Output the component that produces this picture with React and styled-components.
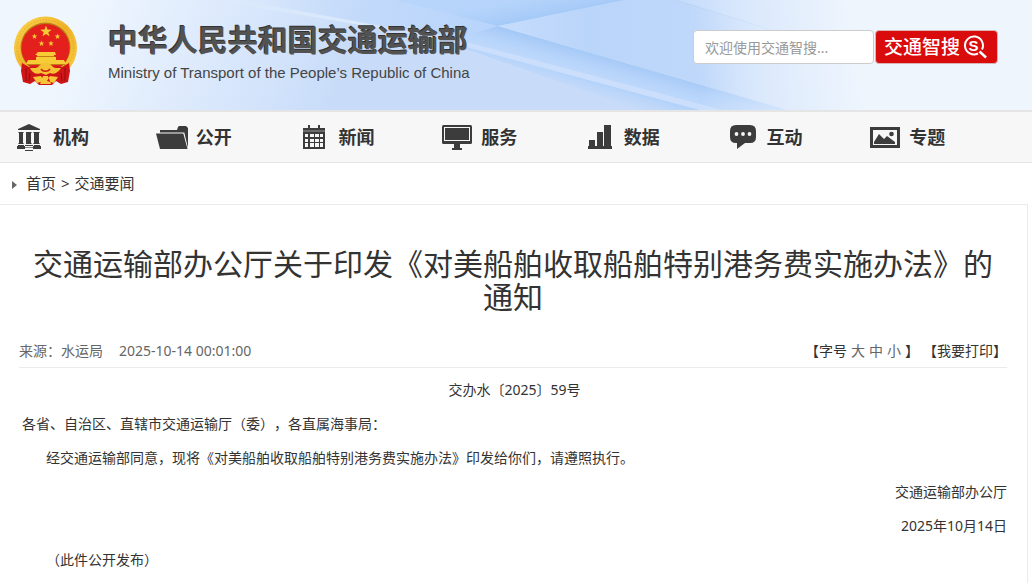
import React from 'react';
import styled, { createGlobalStyle } from 'styled-components';

const GlobalStyle = createGlobalStyle`
  * {
    box-sizing: border-box;
  }
  body {
    margin: 0;
    background: #fff;
    color: #333;
    font-family: "Noto Sans", "Noto Sans CJK SC", sans-serif;
    font-size: 14px;
    text-spacing-trim: space-all;
  }
  button, input {
    font-family: inherit;
  }
  a {
    color: inherit;
    text-decoration: none;
  }
`;

const Page = styled.div`
  display: flex;
  flex-direction: column;
  min-height: 100vh;
`;

// Header
const Header = styled.header`
  position: relative;
  display: flex;
  justify-content: space-between;
  align-items: flex-start;
  height: 112px;
  padding: 16px 34px 0 13px;
  border-bottom: 2px solid #e5e5e5;
  background: #eef5fe;
  overflow: hidden;
`;

const HeaderArt = styled.svg`
  position: absolute;
  inset: 0;
  width: 100%;
  height: 100%;
`;

const Brand = styled.a`
  position: relative;
  display: flex;
  gap: 30px;
`;

const BrandText = styled.div`
  padding-top: 4px;
`;

const SiteName = styled.h1`
  margin: 0;
  font-size: 30px;
  line-height: 40px;
  font-weight: 700;
  color: #525252;
  text-shadow: -1px -1px 0 #333;
`;

const SiteNameEn = styled.p`
  margin: 0;
  font-family: "Liberation Sans", Arial, sans-serif;
  font-size: 15px;
  line-height: 26px;
  color: #444;
`;

const SearchForm = styled.form`
  position: relative;
  display: flex;
  gap: 1px;
  padding-top: 14px;
`;

const SearchInput = styled.input`
  width: 181px;
  height: 34px;
  padding: 0 11px;
  border: 1px solid #ccc;
  border-radius: 4px;
  background: #fff;
  font-size: 14px;
  color: #555;
  outline: none;
  &::placeholder {
    color: #999;
    opacity: 1;
  }
`;

const SearchButton = styled.button`
  display: flex;
  align-items: center;
  justify-content: center;
  gap: 3px;
  width: 123px;
  height: 34px;
  padding: 0 2px 0 0;
  border: 1px solid #d9b5b8;
  border-radius: 4px;
  background: #d90b0d;
  color: #fff;
  font-size: 19px;
  line-height: 24px;
  font-weight: 500;
  cursor: pointer;
`;

// Navigation
const Nav = styled.nav`
  display: grid;
  grid-template-columns: repeat(7, 1fr);
  height: 51px;
  padding: 0 20px 0 13px;
  border-bottom: 1px solid #e5e5e5;
  background: #f7f7f7;
`;

const NavLink = styled.a`
  display: flex;
  align-items: center;
  gap: 8px;
  font-size: 18px;
  line-height: 24px;
  font-weight: 700;
  color: #333;
`;

const NavIcon = styled.span`
  display: flex;
  justify-content: center;
  width: 32px;
  color: #3c3c3c;
`;

const Breadcrumb = styled.div`
  display: flex;
  align-items: center;
  gap: 5px;
  height: 41px;
  padding: 0 0 2px 12px;
  font-size: 15px;
  line-height: 22px;
  svg {
    margin: 4px 4px 0 0;
  }
`;

// Article
const Article = styled.article`
  flex: 1;
  margin-right: 4px;
  padding: 42px 20px 6px 19px;
  border-top: 1px solid #ebebeb;
  border-right: 1px solid #ebebeb;
`;

const Title = styled.h2`
  margin: 0 0 21px;
  font-size: 30px;
  line-height: 33px;
  font-weight: 400;
  text-align: center;
`;

const Meta = styled.div`
  display: flex;
  justify-content: space-between;
  height: 34px;
  margin-bottom: 5px;
  border-bottom: 1px solid #ebebeb;
  line-height: 34px;
  color: #666;
`;

const MetaGroup = styled.div`
  display: flex;
  gap: ${({ $gap }) => $gap}px;
`;

const Tools = styled.span`
  display: flex;
  gap: 4px;
  color: #333;
`;

const TextButton = styled.button`
  padding: 0;
  border: 0;
  background: none;
  font-size: 14px;
  line-height: 34px;
  color: ${({ $muted }) => ($muted ? '#666' : '#333')};
  cursor: pointer;
`;

const Paragraph = styled.p`
  margin: 0;
  padding-left: 3px;
  line-height: 34px;
  text-align: ${({ $align }) => $align || 'left'};
  text-indent: ${({ $indent }) => ($indent ? '24px' : '0')};
`;

const star = (cx, cy, r) =>
  Array.from({ length: 10 }, (_, i) => {
    const len = i % 2 ? r * 0.4 : r;
    const a = (Math.PI / 5) * i - Math.PI / 2;
    return `${(cx + len * Math.cos(a)).toFixed(2)},${(cy + len * Math.sin(a)).toFixed(2)}`;
  }).join(' ');

function Emblem() {
  return (
    <svg width="65" height="69" viewBox="0 0 65 69" aria-hidden="true">
      <defs>
        <linearGradient id="gold" x1="0" y1="0" x2="1" y2="1">
          <stop offset="0" stopColor="#fbd750" />
          <stop offset="0.5" stopColor="#efb32a" />
          <stop offset="1" stopColor="#f9cf3f" />
        </linearGradient>
      </defs>
      <circle cx="32.500" cy="32" r="31.500" fill="url(#gold)" />
      <circle cx="32.500" cy="32" r="28" fill="none" stroke="#d99a1d" strokeWidth="2" strokeDasharray="1 2" opacity="0.4" />
      <circle cx="32.500" cy="31.500" r="25" fill="#b97916" />
      <circle cx="32.500" cy="32" r="24" fill="#e3201b" />
      <g fill="#f7cb35">
        <polygon points={star(33, 15.5, 6)} />
        <polygon points={star(21.5, 20.5, 3)} />
        <polygon points={star(44.5, 20.5, 3)} />
        <polygon points={star(28.5, 27.5, 3)} />
        <polygon points={star(38, 27.5, 3)} />
        <path d="M25 36h17l1 3h-2v4H24v-4h-2z" />
        <path d="M23 41h20v4H23z" />
        <path d="M15 44h36l2 4H13z" />
      </g>
      <path d="M24 40.500h18M14 48.500h38" stroke="#c27d12" />
      <path d="M9 47l7 4 8-1 8 4 9-4 8 1 7-4 1 8-2 11-7 2-5-3-4 4H26l-4-4-5 3-7-2-2-11z" fill="#cf1518" />
      <path d="M13 52v13M17 57l-1 8M52 52v13M48 57l1 8" stroke="#930c0e" />
      <path d="M17 52c4 0 7 1 10-3 2-3 9-3 11 0 3 4 6 3 10 3-3 5-8 7-11 5l-4 2-5-2c-4 2-9 0-11-5z" fill="#f4c233" />
      <path d="M28 53c2 3 7 3 9 0" fill="none" stroke="#d02018" strokeWidth="1.500" />
      <path d="M20 61l8-1 3 5-7 2zM45 61l-8-1-3 5 7 2zM30 60h5l3 8H27z" fill="#f7c638" />
    </svg>
  );
}

function Backdrop() {
  return (
    <HeaderArt viewBox="0 0 1032 110" preserveAspectRatio="none" aria-hidden="true">
      <defs>
        <linearGradient id="base" gradientUnits="userSpaceOnUse" x1="90" y1="0" x2="360" y2="110">
          <stop offset="0" stopColor="#eff6fe" />
          <stop offset="0.5" stopColor="#dae8fc" />
          <stop offset="0.9" stopColor="#c8dcf9" />
        </linearGradient>
        <linearGradient id="fold" gradientUnits="userSpaceOnUse" x1="600" y1="54" x2="594" y2="76">
          <stop offset="0" stopColor="#a3c8f6" />
          <stop offset="0.5" stopColor="#b4d2fa" />
          <stop offset="1" stopColor="#bdd8fb" />
        </linearGradient>
        <linearGradient id="under" gradientUnits="userSpaceOnUse" x1="600" y1="83" x2="594" y2="104">
          <stop offset="0" stopColor="#b3d2fa" />
          <stop offset="1" stopColor="#c6dbf9" stopOpacity="0" />
        </linearGradient>
        <linearGradient id="edge" gradientUnits="userSpaceOnUse" x1="560" y1="13" x2="556" y2="-7">
          <stop offset="0" stopColor="#9fc6f6" />
          <stop offset="1" stopColor="#b5d4fb" />
        </linearGradient>
        <linearGradient id="ribbon" gradientUnits="userSpaceOnUse" x1="230" y1="0" x2="480" y2="0">
          <stop offset="0" stopColor="#e6f0fd" stopOpacity="0" />
          <stop offset="0.5" stopColor="#deebfd" stopOpacity="0.9" />
          <stop offset="1" stopColor="#cfe1fc" />
        </linearGradient>
        <linearGradient id="haze" gradientUnits="userSpaceOnUse" x1="260" y1="0" x2="470" y2="0">
          <stop offset="0" stopColor="#bfd9fb" stopOpacity="0" />
          <stop offset="1" stopColor="#b9d5fb" />
        </linearGradient>
        <linearGradient id="wedge" gradientUnits="userSpaceOnUse" x1="500" y1="0" x2="800" y2="0">
          <stop offset="0" stopColor="#c5dcfc" />
          <stop offset="0.3" stopColor="#bad5fa" />
          <stop offset="0.7" stopColor="#bfd8fa" />
          <stop offset="1" stopColor="#d6e6fc" />
        </linearGradient>
        <linearGradient id="fade" gradientUnits="userSpaceOnUse" x1="700" y1="100" x2="860" y2="80">
          <stop offset="0" stopColor="#eef5fd" stopOpacity="0" />
          <stop offset="0.5" stopColor="#e5effd" stopOpacity="0.7" />
          <stop offset="1" stopColor="#eef5fd" />
        </linearGradient>
      </defs>
      <path d="M0 0h1032v110H0z" fill="url(#base)" />
      <path d="M240 0h385L498 26l-40 13z" fill="url(#haze)" />
      <path d="M240 0l230 43L210 0z" fill="url(#ribbon)" />
      <path d="M395 0h230L498 26z" fill="url(#edge)" opacity="0.75" />
      <path d="M498 26l-43 13 15 5 230 66h88z" fill="url(#fold)" />
      <path d="M440 40l260 70h-60z" fill="url(#under)" />
      <path d="M625 0L498 26l290 84h244V0z" fill="url(#wedge)" />
      <path d="M400 24l70 19 252 67h-22L470 48z" fill="#cbdffc" />
      <path d="M676 0l140 44" stroke="#b1cff6" opacity="0.8" />
      <path d="M676 0h150v46z" fill="#cfe1fb" opacity="0.5" />
      <path d="M690 0h342v110H690z" fill="url(#fade)" />
    </HeaderArt>
  );
}

const icons = {
  bank: (
    <svg width="24" height="27" viewBox="0 0 24 27" fill="currentColor">
      <path d="M12 0l11 5v1H1V5zM2 8h4v12H2zM9 8h5v12H9zM17 8h5v12h-5z" />
      <path d="M1 8h6v1H1zM9 8h6v1H9zM16 8h7v1h-7zM1 19h6v1H1zM9 19h6v1H9zM16 19h7v1h-7z" opacity="0.6" />
      <path d="M1 21h6v1h1v3H0v-3h1zM17 21h6v1h1v3h-8v-3h1z" />
      <path d="M8 21h8v1H8zM8 26h8v1H8z" />
      <path d="M8 23h8v1H8z" opacity="0.6" />
    </svg>
  ),
  folder: (
    <svg width="32" height="23" viewBox="0 0 32 23" fill="currentColor">
      <path d="M4 4h17l1-3 1-1h7l2 2v20L28.300 6.500H4z" />
      <path d="M0 7.500h27.300L31.500 23H4z" />
    </svg>
  ),
  calendar: (
    <svg width="22" height="24" viewBox="0 0 22 24" fill="currentColor">
      <path d="M5 0h2v4H5zM15 0h2v4h-2zM0 3h22v2H0z" />
      <path d="M0 5h22v2H0z" opacity="0.75" />
      <path d="M0 7h22v17H0z" />
      <path
        d="M2 9h3v3H2zM7 9h4v3H7zM12 9h4v3h-4zM17 9h3v3h-3zM2 14h3v3H2zM7 14h4v3H7zM12 14h4v3h-4zM17 14h3v3h-3zM2 18h3v4H2zM7 18h4v4H7zM12 18h4v4h-4zM17 18h3v4h-3z"
        fill="#f7f7f7"
      />
    </svg>
  ),
  monitor: (
    <svg width="30" height="25" viewBox="0 0 30 25" fill="currentColor">
      <rect width="30" height="19" rx="1.500" />
      <rect x="2.500" y="2.500" width="25" height="13" fill="none" stroke="#f7f7f7" />
      <path d="M12 19h6v4h2v2H10v-2h2z" />
    </svg>
  ),
  bars: (
    <svg width="24" height="24" viewBox="0 0 24 24" fill="currentColor">
      <path d="M1 15h6v6h2V7h6v14h1V0h7v21h1v3H0v-3h1z" />
    </svg>
  ),
  chat: (
    <svg width="26" height="24" viewBox="0 0 26 24" fill="currentColor">
      <path d="M6 0h14q6 0 6 6v6q0 6-6 6h-5l-8 6v-6H6q-6 0-6-6V6q0-6 6-6z" />
      <g fill="#f7f7f7">
        <circle cx="6.500" cy="9" r="1.900" />
        <circle cx="13" cy="9" r="1.900" />
        <circle cx="19.500" cy="9" r="1.900" />
      </g>
    </svg>
  ),
  picture: (
    <svg width="30" height="21" viewBox="0 0 30 21" fill="currentColor">
      <path d="M0 0h30v21H0zM3 3v15h24V3z" fillRule="evenodd" />
      <path d="M4 17v-2l5-8 5 5 3-3 8 6v2z" />
      <circle cx="21.500" cy="7" r="2.300" />
    </svg>
  ),
};

function SearchMark() {
  return (
    <svg width="24" height="24" viewBox="0 0 24 24" fill="none" stroke="#fff" aria-hidden="true">
      <path d="M19 14.500A9 9 0 1 0 15 18.500" strokeWidth="2" />
      <path d="M16.500 16.500L23 22.500" strokeWidth="2.500" />
      <text x="10.500" y="16" textAnchor="middle" fontFamily="Liberation Sans" fontSize="15" fontWeight="700" fill="#fff" stroke="none">
        S
      </text>
    </svg>
  );
}

const navItems = [
  { label: '机构', icon: 'bank' },
  { label: '公开', icon: 'folder' },
  { label: '新闻', icon: 'calendar' },
  { label: '服务', icon: 'monitor' },
  { label: '数据', icon: 'bars' },
  { label: '互动', icon: 'chat' },
  { label: '专题', icon: 'picture' },
];

function App() {
  return (
    <Page>
      <GlobalStyle />
      <Header>
        <Backdrop />
        <Brand href="#home">
          <Emblem />
          <BrandText>
            <SiteName>中华人民共和国交通运输部</SiteName>
            <SiteNameEn>Ministry of Transport of the People’s Republic of China</SiteNameEn>
          </BrandText>
        </Brand>
        <SearchForm onSubmit={(e) => e.preventDefault()}>
          <SearchInput type="text" aria-label="交通智搜" placeholder="欢迎使用交通智搜..." />
          <SearchButton type="submit">
            交通智搜
            <SearchMark />
          </SearchButton>
        </SearchForm>
      </Header>
      <Nav>
        {navItems.map(({ label, icon }) => (
          <NavLink key={label} href={`#${icon}`}>
            <NavIcon>{icons[icon]}</NavIcon>
            {label}
          </NavLink>
        ))}
      </Nav>
      <Breadcrumb>
        <svg width="5" height="8" viewBox="0 0 5 8" aria-hidden="true">
          <path d="M0 0l5 4-5 4z" fill="#666" />
        </svg>
        <a href="#home">首页</a>
        <span>&gt;</span>
        <a href="#news">交通要闻</a>
      </Breadcrumb>
      <Article>
        <Title>交通运输部办公厅关于印发《对美船舶收取船舶特别港务费实施办法》的通知</Title>
        <Meta>
          <MetaGroup $gap={16}>
            <span>来源：水运局</span>
            <time>2025-10-14 00:01:00</time>
          </MetaGroup>
          <MetaGroup $gap={4}>
            <Tools>
              <span>【字号</span>
              <TextButton $muted>大</TextButton>
              <TextButton $muted>中</TextButton>
              <TextButton $muted>小</TextButton>
              <span>】</span>
            </Tools>
            <TextButton>【我要打印】</TextButton>
          </MetaGroup>
        </Meta>
        <Paragraph $align="center">交办水〔2025〕59号</Paragraph>
        <Paragraph>各省、自治区、直辖市交通运输厅（委），各直属海事局：</Paragraph>
        <Paragraph $indent>
          经交通运输部同意，现将《对美船舶收取船舶特别港务费实施办法》印发给你们，请遵照执行。
        </Paragraph>
        <Paragraph $align="right">交通运输部办公厅</Paragraph>
        <Paragraph $align="right">2025年10月14日</Paragraph>
        <Paragraph $indent>（此件公开发布）</Paragraph>
      </Article>
    </Page>
  );
}

export default App;
